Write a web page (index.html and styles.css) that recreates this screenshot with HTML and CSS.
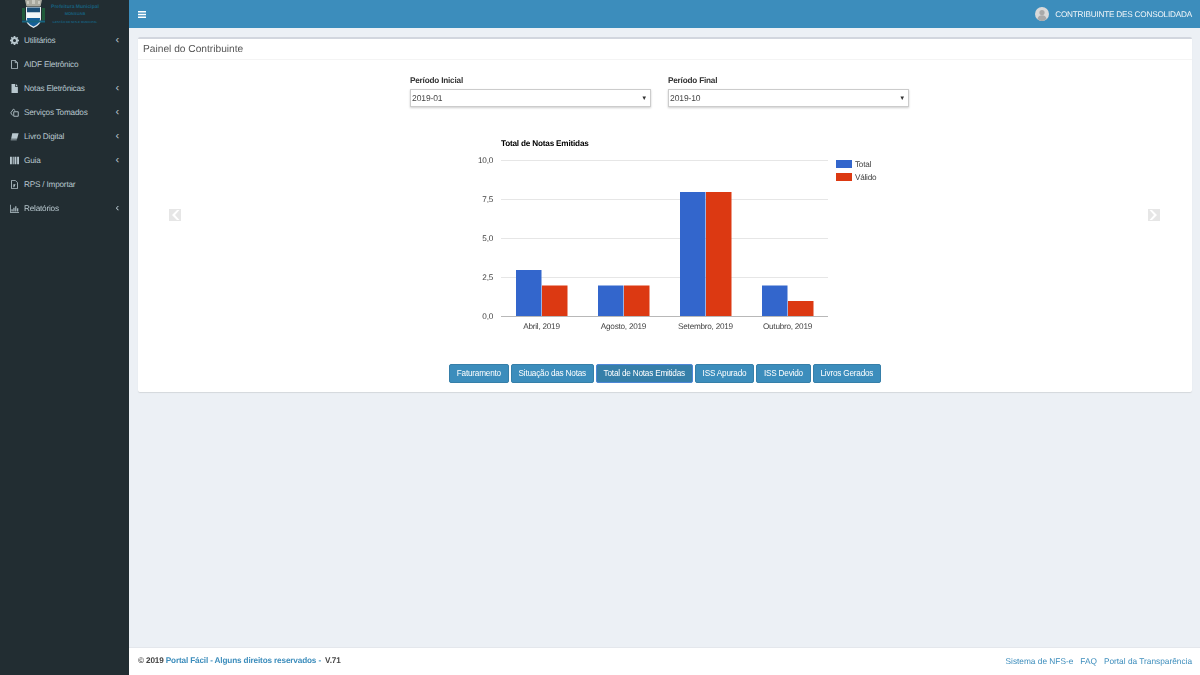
FILE: index.html
```html
<!DOCTYPE html>
<html lang="pt-BR">
<head>
<meta charset="utf-8">
<title>Painel do Contribuinte</title>
<link rel="stylesheet" href="styles.css">
</head>
<body>
<div class="app">
  <aside class="sidebar">
    <div class="logo">
      <svg class="crest" width="24" height="28" viewBox="0 0 24 28">
        <rect x="0" y="8" width="3" height="12" fill="#1f5a3a"/>
        <rect x="20" y="8" width="3" height="12" fill="#1f5a3a"/>
        <path d="M3 0h17l-1.500 6.500H4.500z" fill="#a9a99f"/>
        <path d="M5 1h2v3H5z M10 0h3v4h-3z M16 1h2v3h-2z" fill="#c8c8c0"/>
        <path d="M4 7h15v12q0 6-7.500 9q-7.500-3-7.500-9z" fill="#e8eef2"/>
        <path d="M5 7.500h13v5H5z" fill="#1d4f78"/>
        <path d="M5 12.500h13v5.500H5z" fill="#f3f6f8"/>
        <path d="M5 18h13v1q0 4.500-6.500 7.500q-6.500-3-6.500-7.500z" fill="#16609a"/>
        <rect x="0" y="20.500" width="23" height="2" fill="#16647f"/>
      </svg>
      <div class="logo-text">
        <span class="logo-l1">Prefeitura Municipal</span>
        <span class="logo-l2">MONSUAB</span>
        <span class="logo-l3">GESTÃO DE NFS-E MUNICIPAL</span>
      </div>
    </div>
    <nav class="menu">
      <a class="menu-item"><svg class="ico" viewBox="0 0 12 12"><path d="M5 0h2l.3 1.600 1.100.5 1.400-.9 1.100 1.100-.9 1.400.5 1.100 1.500.2v2l-1.500.3-.5 1.100.9 1.400-1.100 1.100-1.400-.9-1.100.5L7 12H5l-.3-1.500-1.100-.5-1.400.9-1.100-1.100.9-1.400-.5-1.100L0 7V5l1.500-.3.500-1.100-.9-1.400 1.100-1.100 1.400.9 1.100-.5z M6 4a2 2 0 1 0 0 4a2 2 0 0 0 0-4z" fill-rule="evenodd"/></svg><span class="label">Utilitários</span><span class="chev">‹</span></a>
      <a class="menu-item"><svg class="ico" viewBox="0 0 12 12"><path d="M2 .5h5l3 3v8H2z M7 .5v3h3" fill="none" stroke="currentColor" stroke-width="1.100"/></svg><span class="label">AIDF Eletrônico</span></a>
      <a class="menu-item"><svg class="ico" viewBox="0 0 12 12"><path d="M2 0h5v4h3.500v8H2z M8 0l2.500 3H8z"/></svg><span class="label">Notas Eletrônicas</span><span class="chev">‹</span></a>
      <a class="menu-item"><svg class="ico" viewBox="0 0 12 12"><path d="M1 6.500L4.500 1.500l2.500 2M5 5h6v6H5zM1 6.500L3.500 10" fill="none" stroke="currentColor" stroke-width="1.200"/></svg><span class="label">Serviços Tomados</span><span class="chev">‹</span></a>
      <a class="menu-item"><svg class="ico" viewBox="0 0 12 12"><path d="M3 1.500h8.500L9.500 9H1.500z M1 10h8v1H1z"/></svg><span class="label">Livro Digital</span><span class="chev">‹</span></a>
      <a class="menu-item"><svg class="ico" viewBox="0 0 12 12"><path d="M0 1h2.500v10H0z M3.500 1h1.500v10H3.500z M6 1h2.500v10H6z M9.500 1H12v10H9.500z"/></svg><span class="label">Guia</span><span class="chev">‹</span></a>
      <a class="menu-item"><svg class="ico" viewBox="0 0 12 12"><path d="M2 .5h5l3 3v8H2z" fill="none" stroke="currentColor" stroke-width="1.100"/><path d="M4.500 5.500h3L5.500 9.500h-1z"/></svg><span class="label">RPS / Importar</span></a>
      <a class="menu-item"><svg class="ico" viewBox="0 0 12 12"><path d="M0 1h1v9.500h11v1H0z M2 7h1.500v3H2z M4.500 5h1.500v5H4.500z M7 3h1.500v7H7z M9.500 5.500H11V10H9.500z"/></svg><span class="label">Relatórios</span><span class="chev">‹</span></a>
    </nav>
  </aside>
  <div class="main">
    <header class="topbar">
      <svg class="burger" width="8" height="7" viewBox="0 0 8 7"><path d="M0 0h8v1.500H0z M0 2.750h8v1.500H0z M0 5.500h8V7H0z" fill="#fff"/></svg>
      <div class="user">
        <svg class="avatar" width="14" height="14" viewBox="0 0 14 14"><circle cx="7" cy="7" r="7" fill="#d9d9d9"/><circle cx="7" cy="5.500" r="2.600" fill="#a9a9a9"/><path d="M2.500 12q.5-3.800 4.500-3.800t4.500 3.800q-2 2-4.500 2t-4.500-2z" fill="#a9a9a9"/></svg>
        <span>CONTRIBUINTE DES CONSOLIDADA</span>
      </div>
    </header>
    <main class="content">
      <section class="card">
        <h1 class="card-title">Painel do Contribuinte</h1>
        <div class="card-body">
          <div class="filters">
            <div class="field">
              <span class="field-label">Período Inicial</span>
              <div class="select"><span>2019-01</span><span class="caret">▼</span></div>
            </div>
            <div class="field">
              <span class="field-label">Período Final</span>
              <div class="select"><span>2019-10</span><span class="caret">▼</span></div>
            </div>
          </div>
          <svg class="chart" width="500" height="211" viewBox="0 0 500 211">
            <text class="c-title" x="101" y="13">Total de Notas Emitidas</text>
            <g class="grid">
              <rect x="101" y="27" width="327" height="1"/>
              <rect x="101" y="66" width="327" height="1"/>
              <rect x="101" y="105" width="327" height="1"/>
              <rect x="101" y="144" width="327" height="1"/>
            </g>
            <g class="ylab">
              <text x="93" y="30">10,0</text>
              <text x="93" y="69">7,5</text>
              <text x="93" y="108">5,0</text>
              <text x="93" y="147">2,5</text>
              <text x="93" y="186">0,0</text>
            </g>
            <g class="blue">
              <rect x="116" y="137" width="25.500" height="46.500"/>
              <rect x="198" y="152.500" width="25.500" height="31"/>
              <rect x="280" y="59" width="25.500" height="124.500"/>
              <rect x="362" y="152.500" width="25.500" height="31"/>
            </g>
            <g class="red">
              <rect x="142" y="152.500" width="25.500" height="31"/>
              <rect x="224" y="152.500" width="25.500" height="31"/>
              <rect x="306" y="59" width="25.500" height="124.500"/>
              <rect x="388" y="168" width="25.500" height="15.500"/>
            </g>
            <rect class="axis" x="101" y="183" width="327" height="1"/>
            <g class="xlab">
              <text x="141.500" y="196">Abril, 2019</text>
              <text x="223.500" y="196">Agosto, 2019</text>
              <text x="305.500" y="196">Setembro, 2019</text>
              <text x="387.500" y="196">Outubro, 2019</text>
            </g>
            <rect x="436" y="27" width="16" height="8" fill="#3366cc"/>
            <rect x="436" y="40" width="16" height="8" fill="#dc3912"/>
            <text class="leg" x="455" y="34">Total</text>
            <text class="leg" x="455" y="47">Válido</text>
          </svg>
          <div class="tabs">
            <button class="tab">Faturamento</button>
            <button class="tab">Situação das Notas</button>
            <button class="tab active">Total de Notas Emitidas</button>
            <button class="tab">ISS Apurado</button>
            <button class="tab">ISS Devido</button>
            <button class="tab">Livros Gerados</button>
          </div>
          <svg class="arrow arrow-left" width="12" height="12" viewBox="0 0 12 12"><path d="M0 0h12v12H0z M8 1L3 6l5 5h2.500L6 6l4.500-5z" fill="#e6e6e6" fill-rule="evenodd"/></svg>
          <svg class="arrow arrow-right" width="12" height="12" viewBox="0 0 12 12"><path d="M0 0h12v12H0z M4 1l5 5-5 5H1.500L6 6 1.500 1z" fill="#e6e6e6" fill-rule="evenodd"/></svg>
        </div>
      </section>
    </main>
    <footer class="footer">
      <div class="foot-left"><b>© 2019 </b><a>Portal Fácil - Alguns direitos reservados - </a><b class="ver"> V.71</b></div>
      <div class="foot-right"><a>Sistema de NFS-e</a><a>FAQ</a><a>Portal da Transparência</a></div>
    </footer>
  </div>
</div>
</body>
</html>
```
FILE: styles.css
```css
* { box-sizing: border-box; }
html, body { margin: 0; height: 100%; }
body { font-family: "Liberation Sans", Arial, sans-serif; font-size: 8px; color: #333; background: #ecf0f5; overflow: hidden; text-rendering: geometricPrecision; }
.app { display: flex; height: 675px; filter: blur(.35px); }
.sidebar { width: 129px; flex: none; background: #222d32; color: #b8c7ce; }
.logo { height: 28px; display: flex; padding-left: 22px; overflow: hidden; }
.crest { flex: none; }
.logo-text { display: flex; flex-direction: column; align-items: center; width: 50px; color: #17607f; font-weight: bold; margin-left: 4px; padding-top: 4px; }
.logo-l1 { font-size: 5px; line-height: 6px; white-space: nowrap; }
.logo-l2 { font-size: 4px; line-height: 6px; margin-top: 1px; }
.logo-l3 { font-size: 3px; line-height: 5px; margin-top: 3px; white-space: nowrap; }
.menu { display: flex; flex-direction: column; }
.menu-item { height: 24.060px; display: flex; align-items: center; padding: 0 10px; font-size: 8.200px; letter-spacing: -.2px; color: #b8c7ce; }
.ico { width: 9px; height: 9px; fill: currentColor; flex: none; margin-right: 5px; }
.label { flex: 1; white-space: nowrap; }
.chev { font-size: 11px; line-height: 11px; color: #b8c7ce; margin-top: 1px; }
.main { flex: 1; min-width: 0; display: flex; flex-direction: column; }
.topbar { height: 28px; flex: none; background: #3c8dbc; display: flex; align-items: center; justify-content: space-between; padding: 0 8px 0 9px; color: #fff; }
.user { display: flex; align-items: center; gap: 6px; font-size: 8.200px; letter-spacing: -.2px; color: #f2f6f9; }
.avatar { flex: none; }
.content { flex: 1; padding: 9px 8px 0 9px; }
.card { background: #fff; border-top: 2px solid #d2d6de; border-radius: 2px; height: 355px; box-shadow: 0 1px 1px rgba(0,0,0,.1); }
.card-title { margin: 0; height: 21px; padding: 2px 5px 0; font-size: 10.200px; line-height: 18px; font-weight: normal; color: #555; border-bottom: 1px solid #f4f4f4; }
.card-body { position: relative; display: flex; flex-direction: column; align-items: center; }
.filters { display: flex; gap: 17px; margin-top: 14px; margin-left: -11px; }
.field { width: 241px; display: flex; flex-direction: column; }
.field-label { font-size: 8.200px; letter-spacing: -.2px; font-weight: bold; line-height: 14px; color: #333; margin-bottom: 1px; }
.select { height: 18px; border: 1px solid #ccc; box-shadow: 0 1px 2px rgba(0,0,0,.2); display: flex; align-items: center; justify-content: space-between; padding: 0 3px 0 1px; font-size: 8.500px; letter-spacing: -.1px; color: #444; background: #fff; }
.caret { font-size: 6px; color: #333; padding-top: 1px; }
.chart { display: block; margin-top: 26px; margin-left: -30px; }
.chart text { font-family: "Liberation Sans", Arial, sans-serif; font-size: 8.200px; letter-spacing: -.25px; fill: #444; }
.chart .c-title { font-size: 8.200px; letter-spacing: -.2px; font-weight: bold; fill: #000; }
.grid rect { fill: #e6e6e6; }
.ylab text { text-anchor: end; }
.xlab text { text-anchor: middle; }
.blue rect { fill: #3366cc; }
.red rect { fill: #dc3912; }
.axis { fill: #b8b8b8; }
.tabs { display: flex; gap: 2px; margin-top: 20px; }
.tab { height: 19px; padding: 0 6.800px; border: 1px solid #367fa9; border-radius: 2px; background: #3c8dbc; color: #fff; font-family: inherit; font-size: 8.200px; letter-spacing: -.2px; line-height: 17px; }
.tab.active { background: #367fa9; border-color: #4d86d6; }
.arrow { position: absolute; top: 149px; }
.arrow-left { left: 31px; }
.arrow-right { right: 32px; }
.footer { height: 28px; flex: none; background: #fff; border-top: 1px solid #e4e7ec; display: flex; align-items: center; justify-content: space-between; padding: 0 8px 2px 9px; font-size: 8.200px; letter-spacing: -.15px; color: #444; }
.footer a { color: #3c8dbc; font-weight: bold; }
.foot-right { display: flex; gap: 7px; font-size: 8.300px; letter-spacing: 0; }
.foot-right a { font-weight: normal; }
.ver { margin-left: 2px; }
```
